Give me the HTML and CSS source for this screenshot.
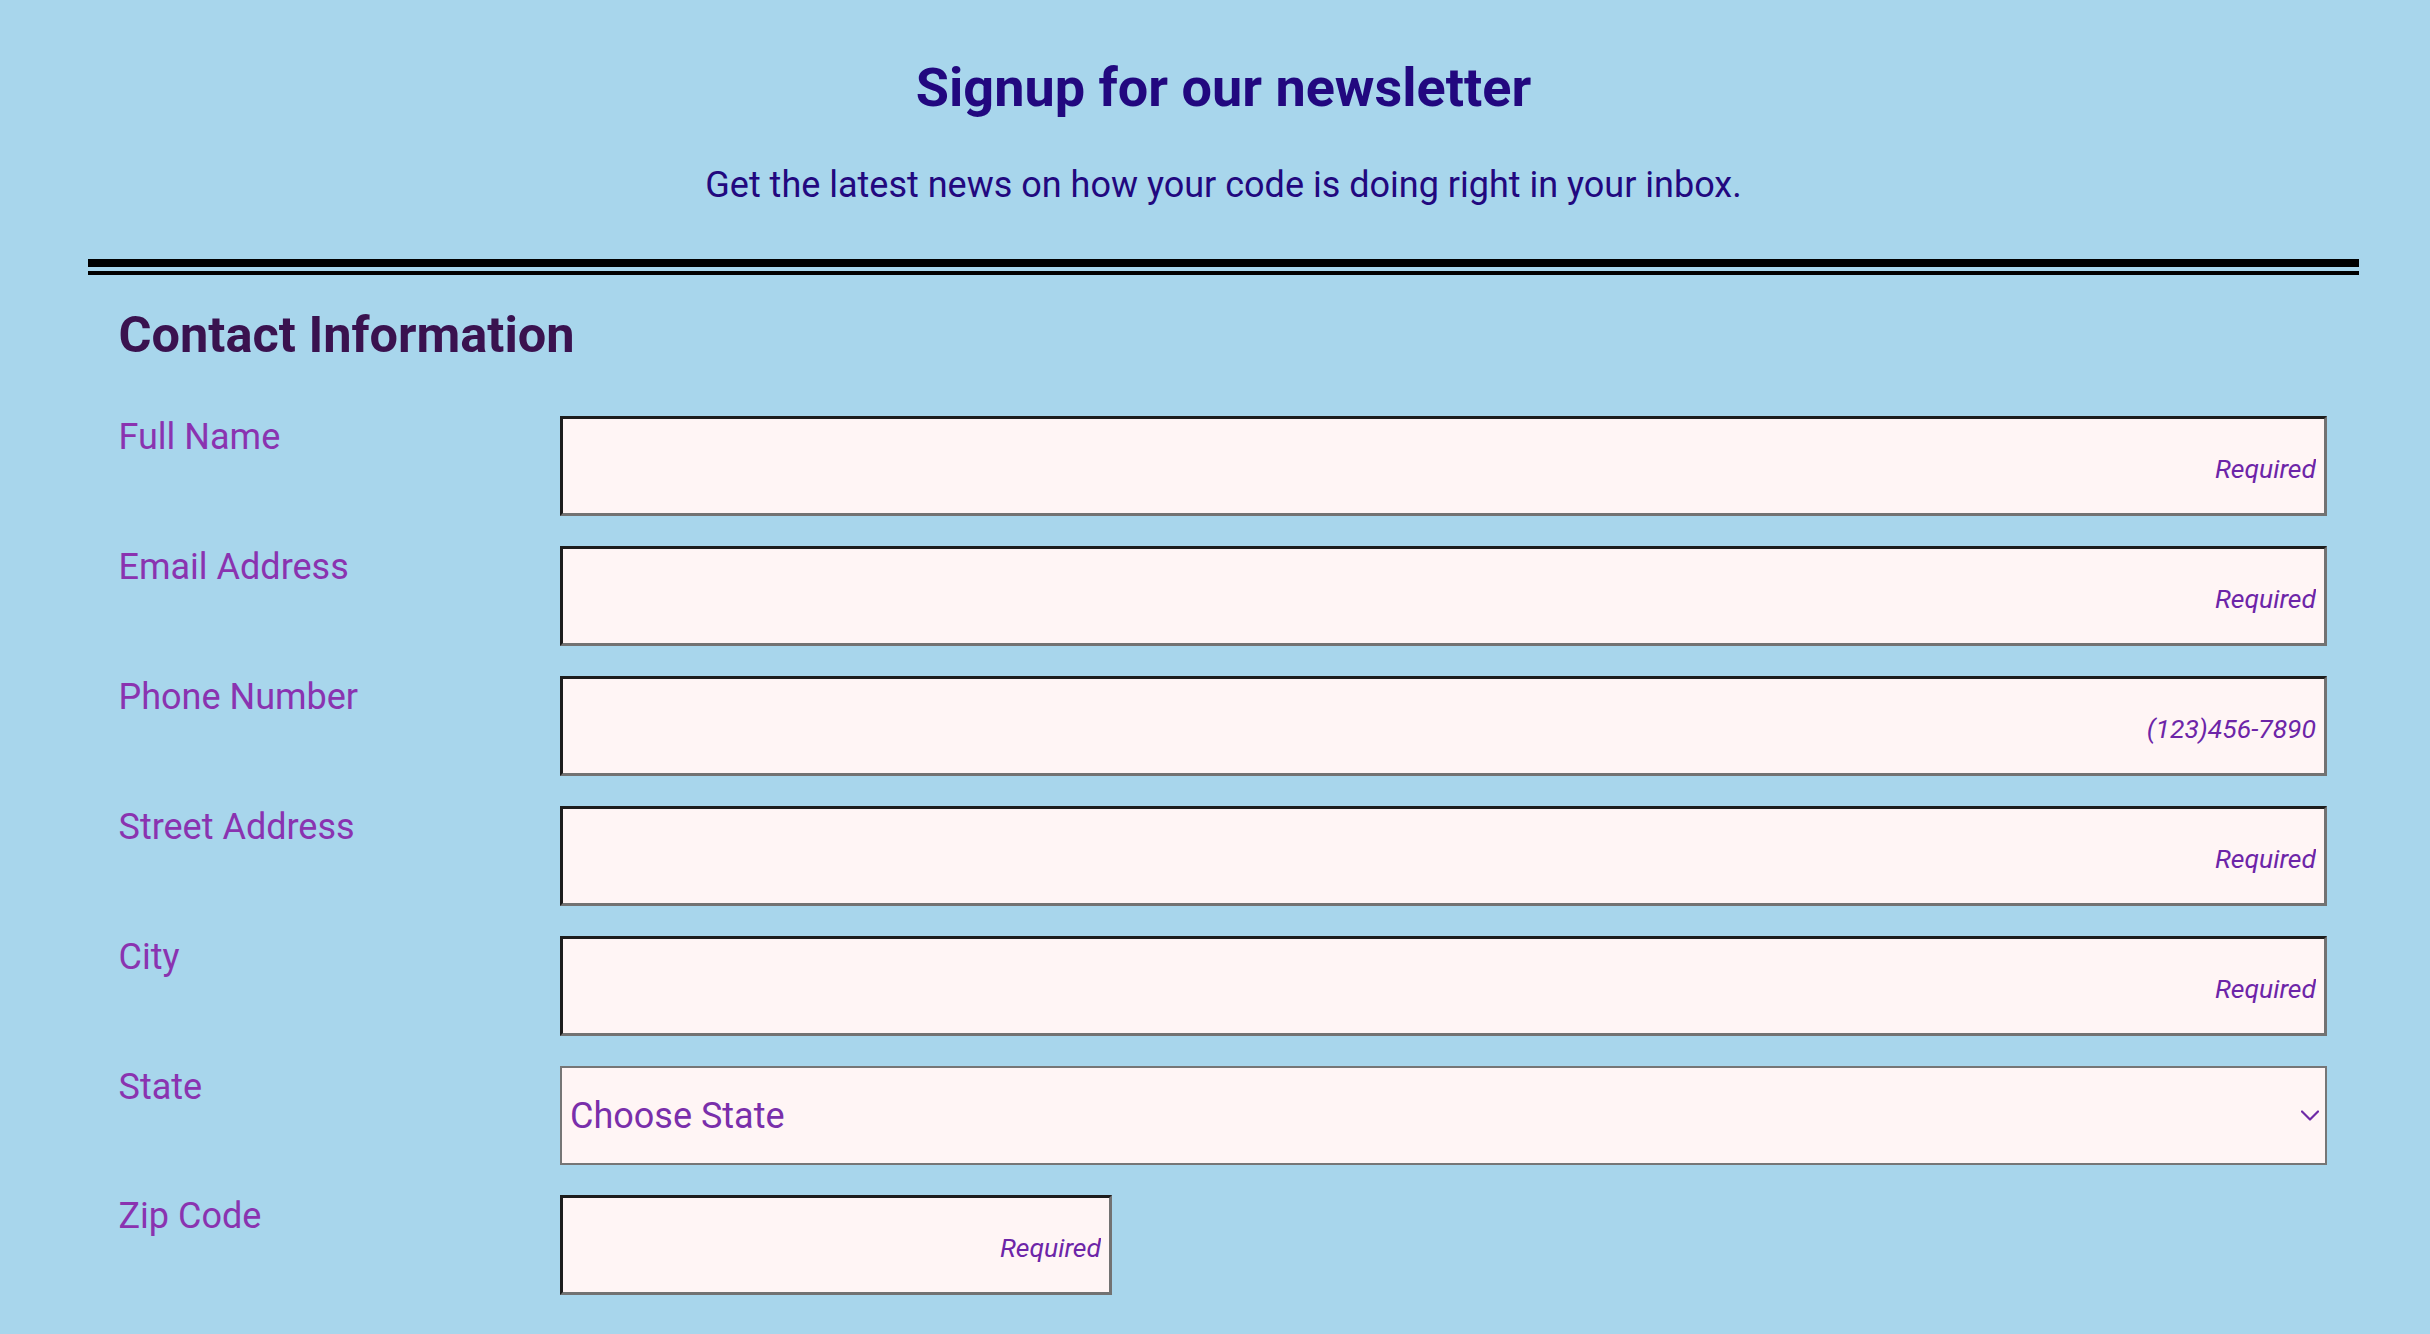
FILE: index.html
```html
<!DOCTYPE html>
<html lang="en">
<head>
<meta charset="utf-8">
<title>Signup for our newsletter</title>
<link rel="stylesheet" href="styles.css">
</head>
<body>
<div class="page">
  <header class="intro">
    <h1 class="title">Signup for our newsletter</h1>
    <p class="subtitle">Get the latest news on how your code is doing right in your inbox.</p>
  </header>
  <div class="divider"></div>
  <form class="form">
    <h2 class="section-title">Contact Information</h2>
    <div class="fields">
      <label class="label" for="name">Full Name</label>
      <input class="field" id="name" type="text" placeholder="Required">

      <label class="label" for="email">Email Address</label>
      <input class="field" id="email" type="email" placeholder="Required">

      <label class="label" for="phone">Phone Number</label>
      <input class="field" id="phone" type="tel" placeholder="(123)456-7890">

      <label class="label" for="street">Street Address</label>
      <input class="field" id="street" type="text" placeholder="Required">

      <label class="label" for="city">City</label>
      <input class="field" id="city" type="text" placeholder="Required">

      <label class="label" for="state">State</label>
      <div class="select-wrap">
        <select class="select" id="state">
          <option>Choose State</option>
        </select>
        <svg class="chevron" width="18" height="11" viewBox="0 0 18 11" aria-hidden="true">
          <polyline points="1,1.5 9,9.5 17,1.5" fill="none" stroke="#6e2aa6" stroke-width="2.2" stroke-linecap="round" stroke-linejoin="round"/>
        </svg>
      </div>

      <label class="label" for="zip">Zip Code</label>
      <input class="field field-zip" id="zip" type="text" placeholder="Required">
    </div>
  </form>
</div>
</body>
</html>
```
FILE: styles.css
```css
html, body {
  margin: 0;
  padding: 0;
  background: #a8d6ec;
  font-family: Roboto, "Liberation Sans", sans-serif;
}

.page {
  margin-left: 88px;
  width: 2271px;
  padding-top: 56px;
}

.intro {
  text-align: center;
}

.title {
  margin: 0;
  font-size: 54px;
  line-height: 64px;
  font-weight: 700;
  color: #22087f;
}

.subtitle {
  margin: 43.5px 0 0;
  font-size: 36px;
  line-height: 42px;
  font-weight: 400;
  color: #22087f;
}

.divider {
  margin-top: 53.5px;
  height: 4px;
  border-top: 8px solid #000;
  border-bottom: 4px solid #000;
}

.form {
  padding: 0 32px 0 30.5px;
}

.section-title {
  margin: 29.5px 0 0;
  font-size: 50.5px;
  line-height: 60px;
  font-weight: 700;
  color: #3a124f;
}

.fields {
  margin-top: 51.5px;
  display: grid;
  grid-template-columns: 441.5px 1fr;
  row-gap: 30px;
  align-items: start;
}

.label {
  font-size: 36px;
  line-height: 42px;
  color: #8a33b0;
}

.field {
  box-sizing: border-box;
  width: 100%;
  height: 100px;
  margin: 0;
  padding: 5px 8px 0;
  border-style: solid;
  border-width: 3px;
  border-color: #1d1d1d #727272 #727272 #1d1d1d;
  background: #fff5f5;
  text-align: right;
  font-family: Roboto, "Liberation Sans", sans-serif;
  font-size: 26.5px;
  font-style: italic;
  color: #6d25a8;
  outline: none;
}

.field::placeholder {
  color: #6d25a8;
  opacity: 1;
  font-style: italic;
}

.field-zip {
  width: 552px;
}

.select-wrap {
  position: relative;
}

.select {
  box-sizing: border-box;
  width: 100%;
  height: 99px;
  margin: 0;
  padding: 0 40px 0 8px;
  border: 2px solid #767676;
  border-radius: 0;
  background: #fff5f5;
  -webkit-appearance: none;
  appearance: none;
  font-family: Roboto, "Liberation Sans", sans-serif;
  font-size: 36px;
  color: #7a2fab;
  outline: none;
}

.chevron {
  position: absolute;
  right: 8px;
  top: 44px;
  pointer-events: none;
}
```
